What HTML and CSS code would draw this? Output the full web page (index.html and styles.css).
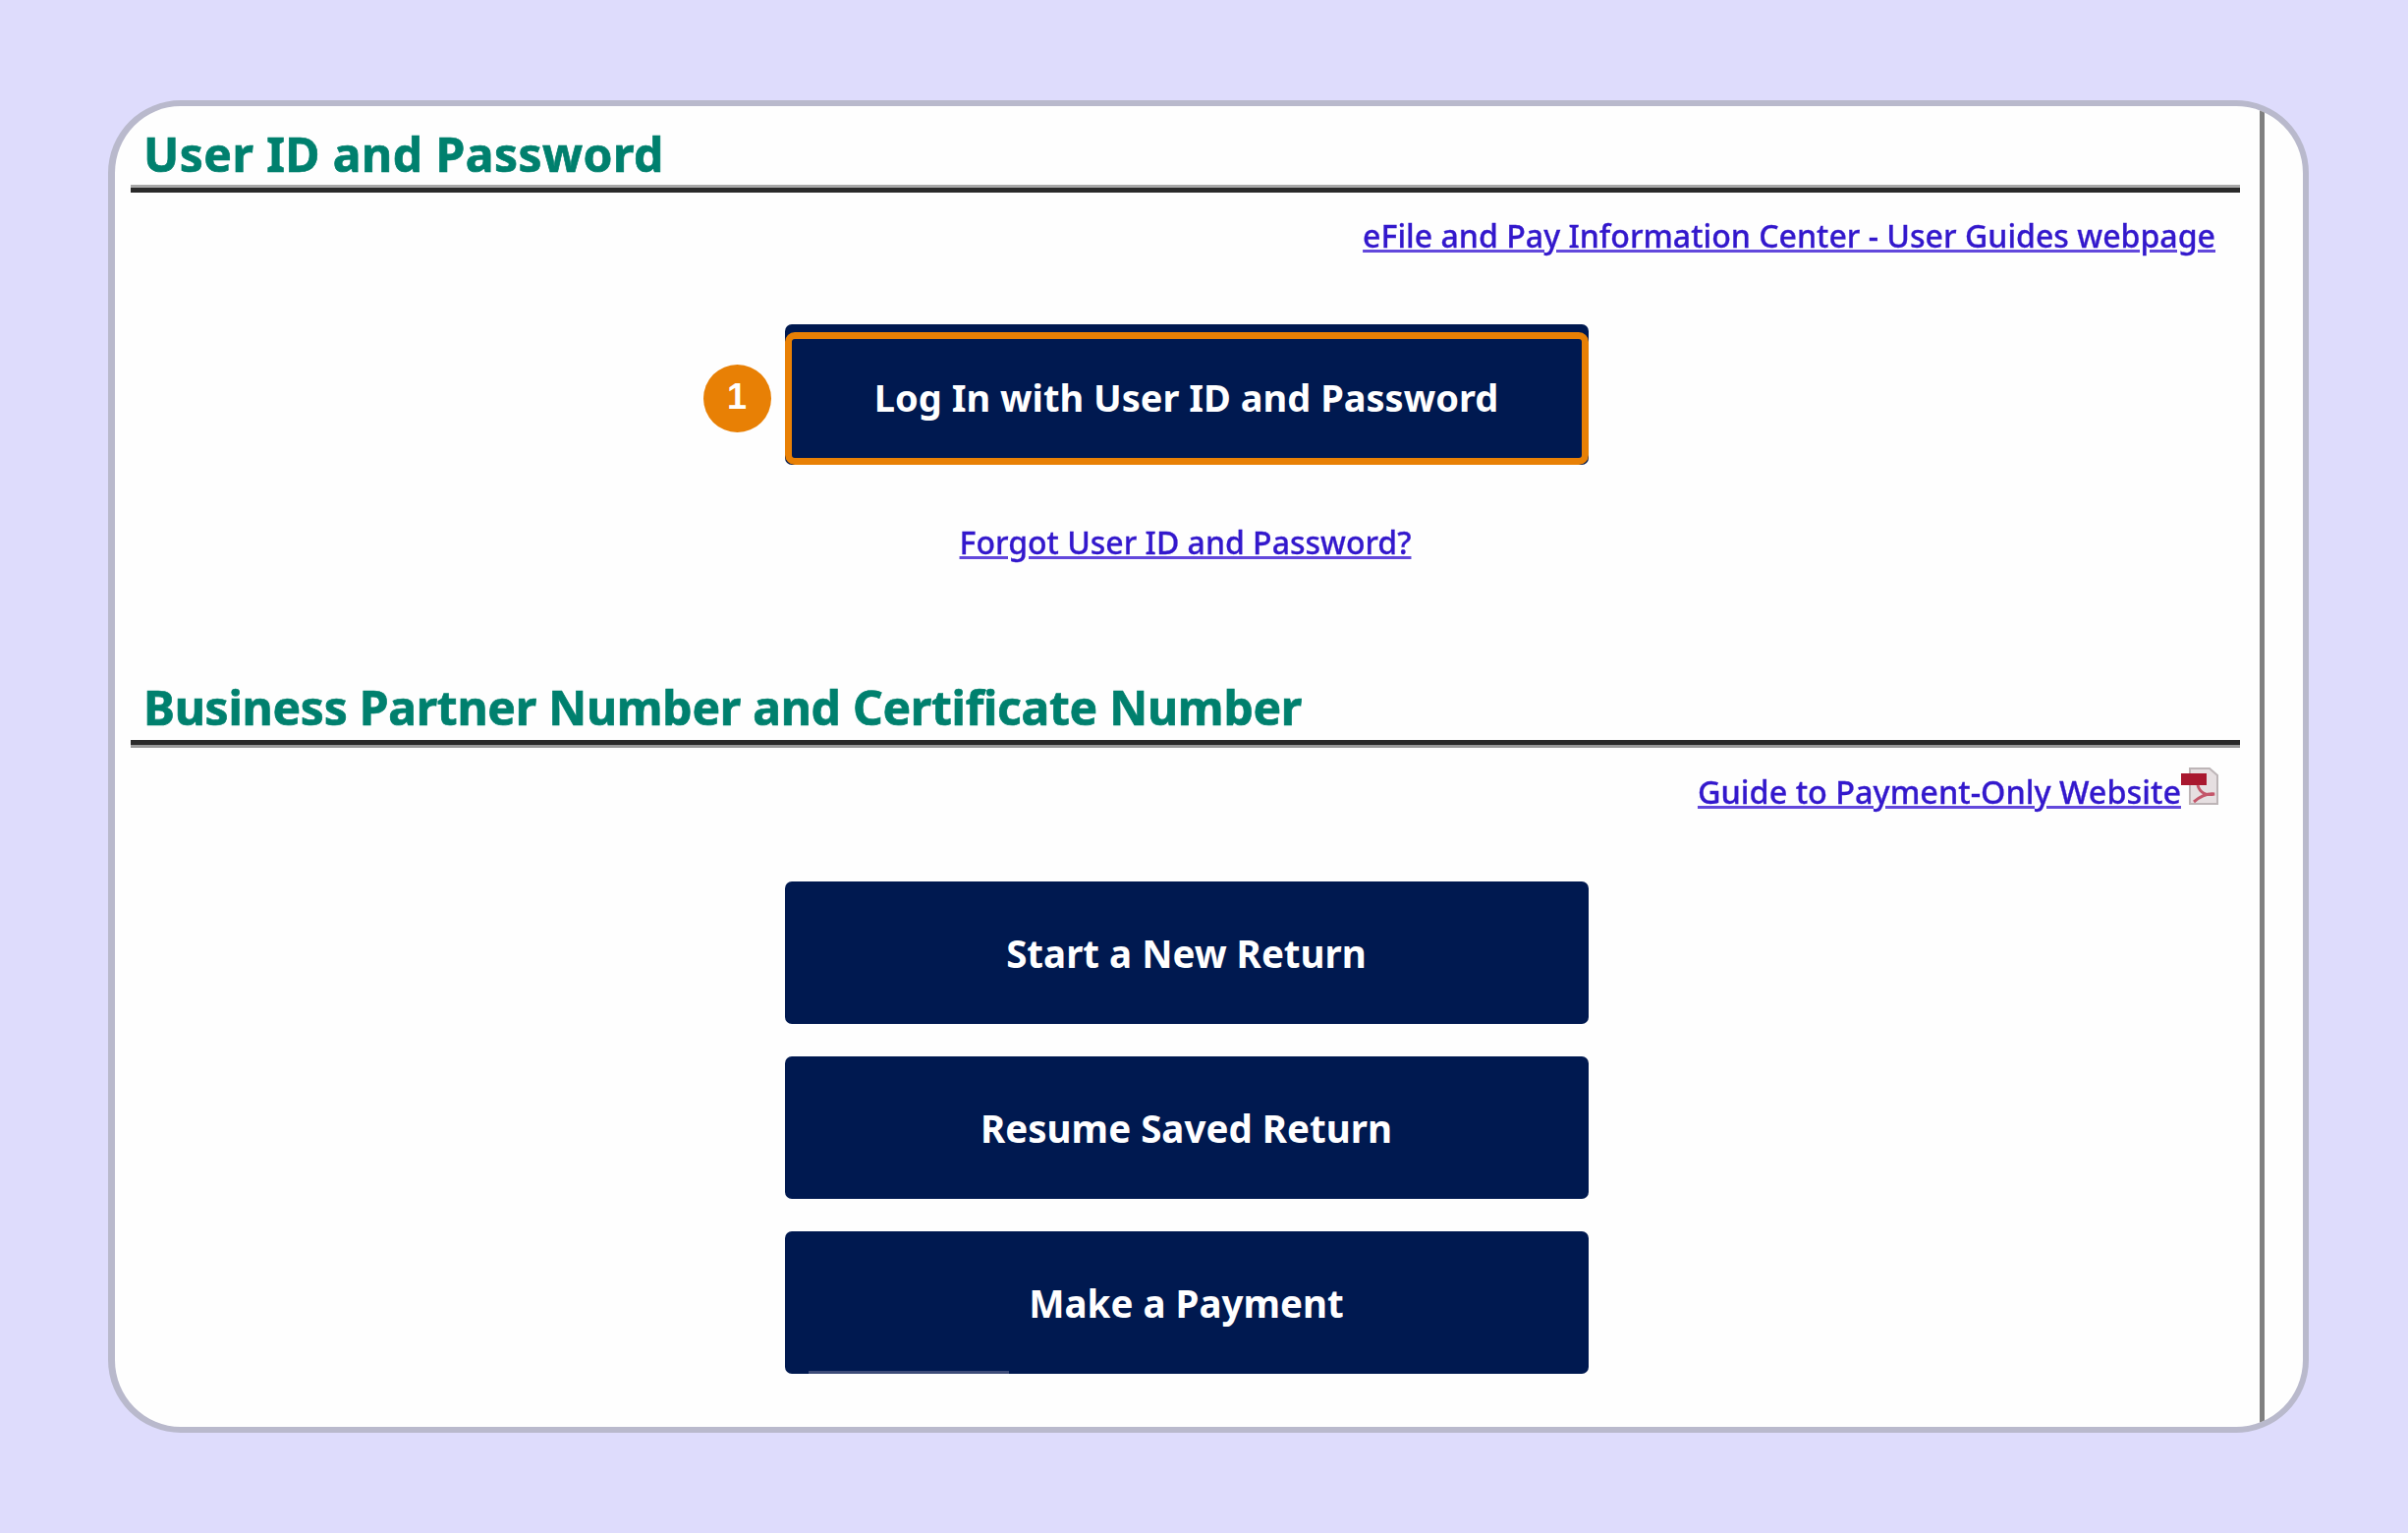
FILE: index.html
```html
<!DOCTYPE html>
<html lang="en">
<head>
<meta charset="utf-8">
<title>User ID and Password</title>
<link rel="stylesheet" href="styles.css">
</head>
<body>
<main class="card">
  <div class="pane">
    <section class="section first">
      <h2 class="title">User ID and Password</h2>
      <p class="aside"><a href="#">eFile and Pay Information Center - User Guides webpage</a></p>
      <div class="actions login">
        <a class="btn btn-marked" href="#"><span class="step">1</span>Log In with User ID and Password</a>
      </div>
      <p class="forgot"><a href="#">Forgot User ID and Password?</a></p>
    </section>
    <section class="section second">
      <h2 class="title">Business Partner Number and Certificate Number</h2>
      <p class="aside guide"><a href="#">Guide to Payment-Only Website</a><svg class="pdf" viewBox="0 0 38 38" width="38" height="38" aria-hidden="true"><path d="M9 1H29L37 8V37H9Z" fill="#e6dfe1" stroke="#bdb5b7" stroke-width="2"/><rect x="0" y="6" width="26" height="12" fill="#a9182f"/><path d="M17 18C19 26 26 29 34 27C26 26 19 30 13 35" fill="none" stroke="#c4566a" stroke-width="3"/></svg></p>
      <div class="actions stack">
        <a class="btn" href="#">Start a New Return</a>
        <a class="btn" href="#">Resume Saved Return</a>
        <a class="btn btn-streak" href="#">Make a Payment</a>
      </div>
    </section>
  </div>
</main>
</body>
</html>
```
FILE: styles.css
```css
* { box-sizing: border-box; }
html, body { margin: 0; padding: 0; }
body { background: #dedcfc; width: 2451px; height: 1560px; padding: 102px 0 0 110px; overflow: hidden; font-family: "Noto Sans", "Liberation Sans", sans-serif; }
.card { width: 2240px; height: 1356px; background: #fefefe; border: 6px solid #b9b9cc; border-left-width: 7px; border-radius: 74px; overflow: hidden; }
.pane { width: 2188px; height: 100%; border-right: 5px solid #808080; padding: 0 20px 0 16px; filter: blur(0.7px); }
.section { display: flex; flex-direction: column; }
.title { margin: 0; height: 88px; padding: 23px 0 0 13px; border-bottom: 5px solid #2a2a2a; box-shadow: inset 0 -3px 0 #a8a8a8; color: #00806e; font-size: 48px; line-height: 52px; font-weight: 700; white-space: nowrap; -webkit-text-stroke: 0.7px #00806e; }
.first .title { letter-spacing: 0.45px; }
.second .title { box-shadow: 0 3px 0 #999; padding-top: 24px; letter-spacing: -0.27px; }
.aside { margin: 0; padding: 22px 25px 0 0; text-align: right; font-size: 32.1px; line-height: 44px; font-weight: 500; }
a { color: #3318cc; }
.aside a, .forgot a { text-decoration-color: #6248dc; -webkit-text-stroke: 0.3px #3318cc; }
.actions { display: flex; flex-direction: column; align-items: center; margin-left: 2px; }
.login { margin-top: 68px; }
.btn { position: relative; display: flex; align-items: center; justify-content: center; width: 818px; height: 145px; border-radius: 7px; background: #001950; color: #fff; font-size: 38.5px; font-weight: 700; text-decoration: none; white-space: nowrap; }
.btn-marked { height: 143px; padding-top: 4px; font-size: 38px; }
.btn-marked::after { content: ""; position: absolute; top: 8px; right: 0; bottom: 0; left: 0; border: 7px solid #e88005; border-radius: 10px; }
.btn-streak::after { content: ""; position: absolute; left: 24px; bottom: 0; width: 204px; height: 3px; background: #3d4c78; }
.step { position: absolute; left: -83px; top: 41px; width: 69px; height: 69px; border-radius: 50%; background: #e88005; color: #fff; font-family: "Liberation Sans", sans-serif; font-size: 36px; font-weight: 700; display: flex; align-items: center; justify-content: center; padding-bottom: 3px; }
.forgot { margin: 57px 0 0; text-align: center; font-size: 32px; line-height: 44px; font-weight: 500; }
.second { margin-top: 96px; }
.guide { display: flex; justify-content: flex-end; align-items: flex-start; padding: 23px 22px 0 0; font-size: 32.4px; }
.guide a { margin-top: 2px; }
.pdf { flex: none; }
.stack { margin-top: 70px; gap: 33px; }
```
